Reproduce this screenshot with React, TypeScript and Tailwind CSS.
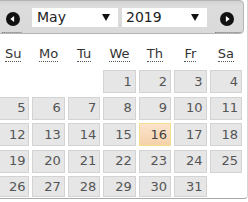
import React from "react";

const rows: (number | null)[][] = [
  [null, null, null, 1, 2, 3, 4],
  [5, 6, 7, 8, 9, 10, 11],
  [12, 13, 14, 15, 16, 17, 18],
  [19, 20, 21, 22, 23, 24, 25],
  [26, 27, 28, 29, 30, 31, null],
];

const days = ["Su", "Mo", "Tu", "We", "Th", "Fr", "Sa"];

function CircleArrow({ dir }: { dir: "w" | "e" }) {
  return (
    <svg width="14" height="14" viewBox="0 0 14 14">
      <circle cx="7" cy="7" r="7" fill="#111" />
      {dir === "w" ? (
        <polygon points="4.3,7 8.1,3.9 8.1,10.1" fill="#fff" />
      ) : (
        <polygon points="9.7,7 5.9,3.9 5.9,10.1" fill="#fff" />
      )}
    </svg>
  );
}

function Caret() {
  return (
    <svg width="8" height="7" viewBox="0 0 8 7">
      <polygon points="0,0 8,0 4,7" fill="#111" />
    </svg>
  );
}

export default function App() {
  return (
    <div className="w-[248px] h-[202px] overflow-hidden bg-white font-['DejaVu_Sans',Verdana,sans-serif]">
      <div className="-mt-[3px] -ml-[8px] w-[256px] border border-[#aaaaaa] border-r-[#d6d6d6] rounded-br-[4px] bg-white p-[2px] pb-[1px]">
        {/* header */}
        <div className="mr-[1px] h-[34px] flex items-start rounded-[4px] border border-[#b5b5b5] bg-[linear-gradient(to_bottom,#d2d2d2,#dcdcdc_15%,#dadada)]">
          <div className="ml-[6px] mt-[4px] w-[21px] h-[28px] flex justify-center pt-[7px] border-b border-dotted border-[#666] rounded-br-[3px]">
            <CircleArrow dir="w" />
          </div>
          <div className="ml-[9px] mt-[7px] w-[86px] h-[19px] bg-white flex items-center justify-between pl-[5px] pr-[8px] text-[14px] leading-[19px] text-[#222]">
            <span>May</span>
            <Caret />
          </div>
          <div className="ml-[4px] mt-[7px] w-[85px] h-[19px] bg-white flex items-center justify-between pl-[4px] pr-[8px] text-[14px] leading-[19px] text-[#222]">
            <span>2019</span>
            <Caret />
          </div>
          <div className="ml-[8px] mt-[4px] w-[27px] h-[28px] flex justify-start pl-[5px] pt-[7px] border-b border-dotted border-[#666] rounded-br-[3px]">
            <CircleArrow dir="e" />
          </div>
        </div>
        {/* weekday header */}
        <div className="pl-[2px] w-[247px] h-[36px] grid grid-cols-7 gap-x-[3px] items-end pb-[8px]">
          {days.map((d) => (
            <div key={d} className="flex justify-center">
              <span className="text-[13px] leading-[15px] text-[#333] border-b border-dotted border-[#555]">
                {d}
              </span>
            </div>
          ))}
        </div>
        {/* days grid */}
        <div className="pl-[2px] w-[247px] grid grid-cols-7 gap-x-[3px] gap-y-[3.5px]">
          {rows.map((r, ri) =>
            r.map((n, ci) => {
              const h = ri === rows.length - 1 ? "h-[21px]" : "h-[23px]";
              if (n === null) return <div key={`${ri}-${ci}`} className={h} />;
              const hl = n === 16;
              return (
                <div
                  key={`${ri}-${ci}`}
                  className={`${h} flex items-center justify-end pr-[3px] text-[13px] border ${
                    hl
                      ? "border-[#f5df8e] bg-[linear-gradient(to_bottom,#fbe4cb,#f5d1ab)] text-[#444]"
                      : "border-[#d3d3d3] bg-[#e6e6e6] text-[#555]"
                  }`}
                >
                  {n}
                </div>
              );
            })
          )}
        </div>
      </div>
    </div>
  );
}
